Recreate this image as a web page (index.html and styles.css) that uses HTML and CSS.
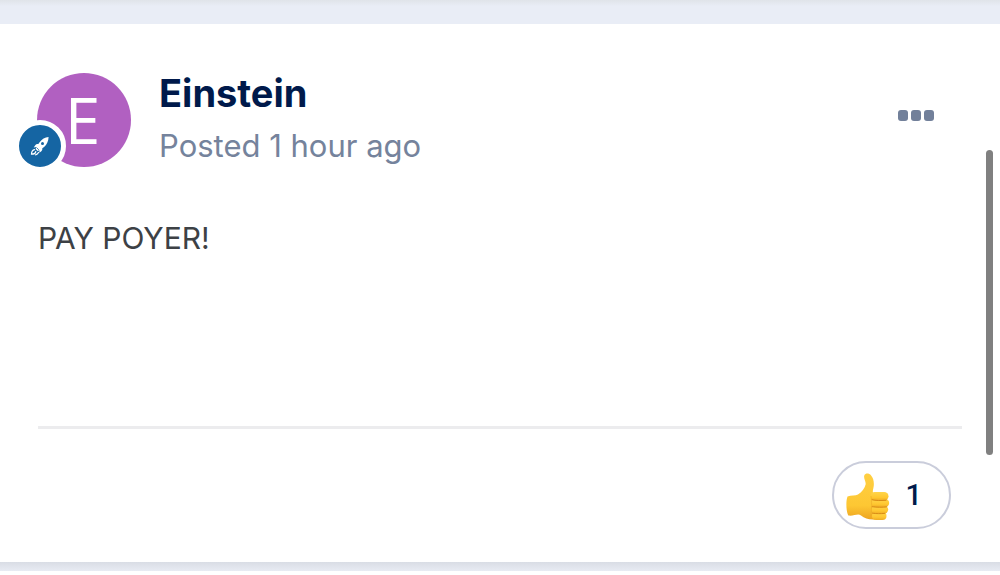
FILE: index.html
```html
<!DOCTYPE html>
<html lang="en">
<head>
<meta charset="utf-8">
<meta name="viewport" content="width=device-width, initial-scale=1">
<title>Post by Einstein</title>
<link rel="stylesheet" href="styles.css">
</head>
<body>
<main class="feed">
  <article class="post">
    <header class="post-header">
      <div class="avatar">
        <span class="avatar-letter">E</span>
        <span class="avatar-badge">
          <svg class="rocket" viewBox="0 0 20 20" aria-hidden="true">
            <path fill="#fff" d="M18.600 1c-3.600.4-6.800 2.200-9 5.200l-1.300 1.900c-1.300-.1-2.400.4-3.200 1.400L3.700 11.400l2.700-.3-.8 2 1.900 1.900 2-.8-.2 2.600 1.800-1.400c1-.9 1.400-2 1.200-3.200l1.800-1.300c2.900-2.300 4.300-5.900 4.500-9.900z"/>
            <circle cx="12.500" cy="7.600" r="1.500" fill="#1565a3"/>
            <path d="M4.600 13.700c-2 .4-3.100 2-3.100 4.500 2.500 0 3.900-.9 4.300-2.700M8.500 16.500c-.6 1.200-1.500 2-2.900 2.300" fill="none" stroke="#fff" stroke-width="1.200" stroke-linecap="round"/>
            <path d="M6.500 11.500l2.400 2.400" stroke="#1565a3" stroke-width=".8"/>
          </svg>
        </span>
      </div>
      <div class="byline">
        <h1 class="author">Einstein</h1>
        <p class="posted">Posted 1 hour ago</p>
      </div>
      <button class="more" type="button" aria-label="More options"><span class="dot"></span><span class="dot"></span><span class="dot"></span></button>
    </header>
    <p class="post-text">PAY POYER!</p>
    <footer class="post-footer">
      <button class="reaction" type="button" aria-label="Like, 1 reaction">
        <svg class="thumb" viewBox="0 0 44 48" aria-hidden="true">
          <defs>
            <linearGradient id="skin" x1="0" y1="0" x2="0" y2="1">
              <stop offset="0" stop-color="#ffcf42"/>
              <stop offset=".7" stop-color="#fdc733"/>
              <stop offset="1" stop-color="#eda421"/>
            </linearGradient>
            <linearGradient id="finger" x1="0" y1="0" x2="0" y2="1">
              <stop offset="0" stop-color="#ffd54b"/>
              <stop offset=".65" stop-color="#ffc72f"/>
              <stop offset="1" stop-color="#efab25"/>
            </linearGradient>
          </defs>
          <path fill="url(#skin)" d="M1.500 23.500C5 22 9.500 23 12 21.500c3.800-2.500 6.800-6.200 7.600-10 .6-3-2.300-6.500-1.300-9C19.300-.1 22.900.1 24.700 2c3.200 3.300 3.700 8.600 2.700 13-.5 1.900-.8 3.200-.4 4.700L32 29l-2 17.200c-6 .7-11-.4-15-3.800-3-2.500-7.500 1-12.700.1C0 38-.2 28 1.500 23.500z"/>
          <rect x="26" y="38.800" width="14.500" height="8.200" rx="4.100" fill="url(#finger)"/>
          <rect x="25.400" y="32.400" width="16.800" height="8.400" rx="4.200" fill="url(#finger)"/>
          <rect x="25.200" y="25.800" width="18" height="8.400" rx="4.200" fill="url(#finger)"/>
          <rect x="24.500" y="19" width="18" height="8.400" rx="4.200" fill="url(#finger)"/>
          <path d="M26 26.700c4 1 8 1 14 .6M26.200 33.700c5 .7 10 .7 14.300.2M26.500 40.200c4 .6 8 .6 12 .2" fill="none" stroke="#d98c17" stroke-width="1" stroke-linecap="round"/>
          <path d="M25 23c1 6 .7 13-.1 20" fill="none" stroke="#e7a423" stroke-width=".8" opacity=".6"/>
        </svg>
        <span class="count">1</span>
      </button>
    </footer>
  </article>
  <div class="scroll-thumb"></div>
</main>
</body>
</html>
```
FILE: styles.css
```css
* {
  box-sizing: border-box;
}

body {
  margin: 0;
  background: #fff;
  font-family: Inter, "Noto Sans", sans-serif;
}

.feed {
  position: relative;
  padding: 24px 0 9px;
  background:
    linear-gradient(#e0e4e9, #e9edf6) top / 100% 6px no-repeat,
    linear-gradient(#d9dde5, #e8ebf3) bottom / 100% 9px no-repeat,
    #e9edf6;
}

.post {
  padding: 48px 38px 33px;
  background: #fff;
}

.post-header {
  display: flex;
  align-items: flex-start;
}

.avatar {
  position: relative;
  display: flex;
  flex: none;
  align-items: center;
  justify-content: center;
  width: 94px;
  height: 94px;
  margin: 1px 28px 0 -1px;
  padding-right: 3px;
  border-radius: 50%;
  background: #b160c1;
}

.avatar-letter {
  color: #fff;
  font-family: "Open Sans", "Noto Sans", sans-serif;
  font-size: 64px;
  line-height: 92px;
}

.avatar-badge {
  position: absolute;
  left: -23px;
  bottom: -5px;
  display: flex;
  align-items: center;
  justify-content: center;
  width: 52px;
  height: 52px;
  border: 5px solid #fff;
  border-radius: 50%;
  background: #1565a3;
}

.rocket {
  width: 20px;
  height: 20px;
}

.byline {
  flex: 1;
}

.author {
  margin: 0;
  color: #001a4b;
  font-size: 38px;
  font-weight: 700;
  line-height: 42px;
}

.posted {
  margin: 12px 0 0;
  color: #75839c;
  font-size: 31px;
  line-height: 40px;
}

.more {
  display: flex;
  gap: 3px;
  margin: 28px 18px 0 0;
  padding: 10px;
  border: 0;
  background: transparent;
}

.dot {
  width: 10px;
  height: 11px;
  border-radius: 3px;
  background: #72809a;
}

.post-text {
  min-height: 208px;
  margin: 51px 0 0;
  color: #3d4145;
  font-size: 30px;
  line-height: 40px;
}

.post-footer {
  display: flex;
  justify-content: flex-end;
  padding: 32px 11px 0 0;
  border-top: 3px solid #ececee;
}

.reaction {
  display: flex;
  align-items: center;
  gap: 16px;
  height: 68px;
  padding: 0 27px 0 12px;
  border: 2px solid #cacddb;
  border-radius: 34px;
  background: #fff;
  color: #001a4b;
}

.thumb {
  width: 44px;
  height: 48px;
  margin-top: 3px;
}

.count {
  font-family: Roboto, sans-serif;
  font-size: 29px;
  font-weight: 500;
  line-height: 34px;
}

.scroll-thumb {
  position: absolute;
  top: 150px;
  right: 7px;
  width: 7px;
  height: 305px;
  border-radius: 4px;
  background: #808080;
}
```
